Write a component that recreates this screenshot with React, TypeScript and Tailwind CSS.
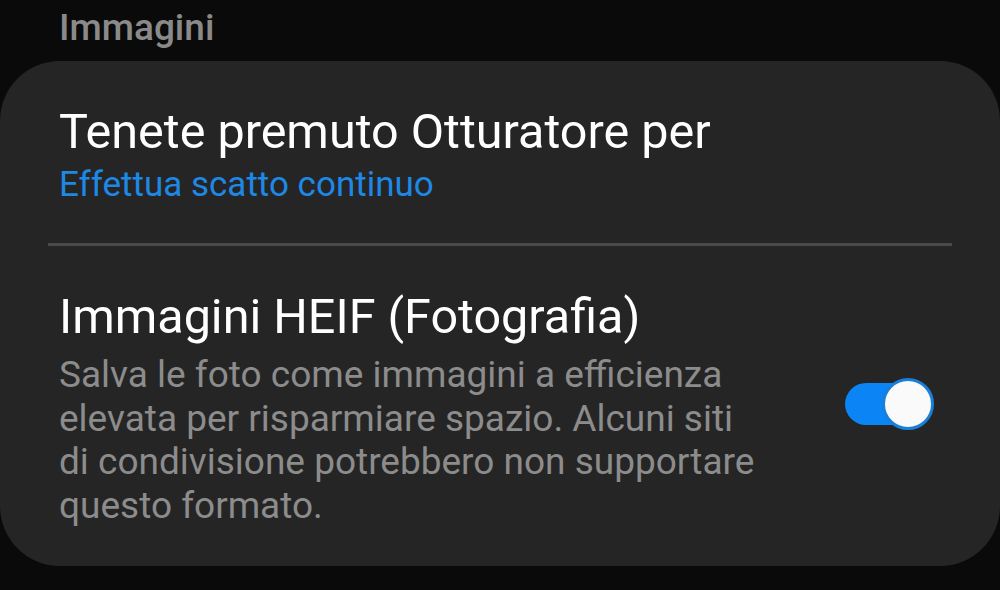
export default function App() {
  return (
    <div
      className="w-[1000px] h-[590px] bg-[#0a0a0a] overflow-hidden flex flex-col"
      style={{ fontFamily: "Roboto, 'Noto Sans', sans-serif" }}
    >
      {/* Section header */}
      <div className="h-[61px] pl-[59px] pt-[4px] text-[37px] font-medium text-[#8a8a8a] leading-[48px]">
        Immagini
      </div>

      {/* Card */}
      <div className="w-[1000px] h-[505px] bg-[#252525] rounded-[60px] flex flex-col">
        {/* Row 1 */}
        <div className="pl-[59px] pr-[48px] pt-[40px] h-[182px]">
          <div className="text-[48.5px] text-white leading-[62px]">Tenete premuto Otturatore per</div>
          <div className="text-[35px] text-[#1e88e5] leading-[44px]">Effettua scatto continuo</div>
        </div>

        <div className="mx-[48px] h-[3px] bg-[#4a4a4a]" />

        {/* Row 2 */}
        <div className="pl-[59px] pr-[66px] pt-[40px] flex items-center justify-between">
          <div className="w-[712px]">
            <div className="text-[48.5px] text-white leading-[62px]">Immagini HEIF (Fotografia)</div>
            <div className="mt-[5px] text-[37px] text-[#8c8c8c] leading-[43.5px]">
              Salva le foto come immagini a efficienza elevata per risparmiare spazio. Alcuni siti di condivisione
              potrebbero non supportare questo formato.
            </div>
          </div>

          {/* Toggle */}
          <div className="relative w-[89px] h-[52px] mt-[-6px]">
            <div className="absolute left-0 top-[5px] w-[74px] h-[42px] rounded-full bg-[#0b84f5]" />
            <div className="absolute right-0 top-0 w-[52px] h-[52px] rounded-full bg-[#fafafa] border-[3px] border-[#1a7fd8]" />
          </div>
        </div>
      </div>
    </div>
  );
}
